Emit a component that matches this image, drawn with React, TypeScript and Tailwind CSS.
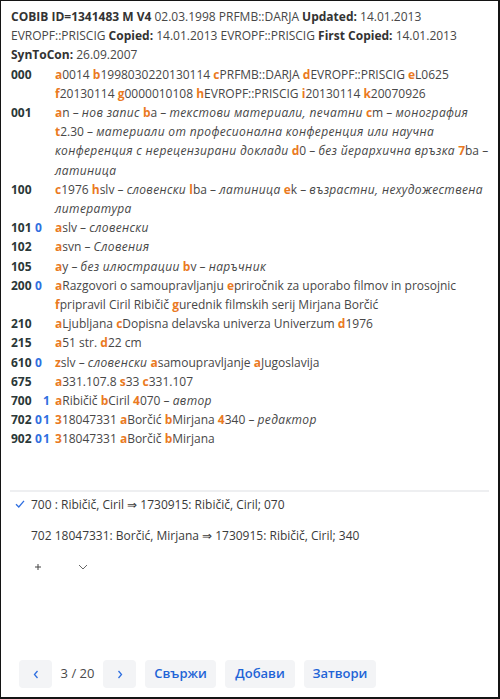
import React from "react";

type Sub = { c: string; v: string; d?: string };
type Row = { tag: string; i1?: string; i2?: string; subs: Sub[] };

const rows: Row[] = [
  {
    tag: "000",
    subs: [
      { c: "a", v: "0014" },
      { c: "b", v: "1998030220130114" },
      { c: "c", v: "PRFMB::DARJA" },
      { c: "d", v: "EVROPF::PRISCIG" },
      { c: "e", v: "L0625" },
      { c: "f", v: "20130114" },
      { c: "g", v: "0000010108" },
      { c: "h", v: "EVROPF::PRISCIG" },
      { c: "i", v: "20130114" },
      { c: "k", v: "20070926" },
    ],
  },
  {
    tag: "001",
    subs: [
      { c: "a", v: "n", d: "нов запис" },
      { c: "b", v: "a", d: "текстови материали, печатни" },
      { c: "c", v: "m", d: "монография" },
      { c: "t", v: "2.30", d: "материали от професионална конференция или научна конференция с нерецензирани доклади" },
      { c: "d", v: "0", d: "без йерархична връзка" },
      { c: "7", v: "ba", d: "латиница" },
    ],
  },
  {
    tag: "100",
    subs: [
      { c: "c", v: "1976" },
      { c: "h", v: "slv", d: "словенски" },
      { c: "l", v: "ba", d: "латиница" },
      { c: "e", v: "k", d: "възрастни, нехудожествена литература" },
    ],
  },
  { tag: "101", i1: "0", subs: [{ c: "a", v: "slv", d: "словенски" }] },
  { tag: "102", subs: [{ c: "a", v: "svn", d: "Словения" }] },
  {
    tag: "105",
    subs: [
      { c: "a", v: "y", d: "без илюстрации" },
      { c: "b", v: "v", d: "наръчник" },
    ],
  },
  {
    tag: "200",
    i1: "0",
    subs: [
      { c: "a", v: "Razgovori o samoupravljanju" },
      { c: "e", v: "priročnik za uporabo filmov in prosojnic" },
      { c: "f", v: "pripravil Ciril Ribičič" },
      { c: "g", v: "urednik filmskih serij Mirjana Borčić" },
    ],
  },
  {
    tag: "210",
    subs: [
      { c: "a", v: "Ljubljana" },
      { c: "c", v: "Dopisna delavska univerza Univerzum" },
      { c: "d", v: "1976" },
    ],
  },
  {
    tag: "215",
    subs: [
      { c: "a", v: "51 str." },
      { c: "d", v: "22 cm" },
    ],
  },
  {
    tag: "610",
    i1: "0",
    subs: [
      { c: "z", v: "slv", d: "словенски" },
      { c: "a", v: "samoupravljanje" },
      { c: "a", v: "Jugoslavija" },
    ],
  },
  {
    tag: "675",
    subs: [
      { c: "a", v: "331.107.8" },
      { c: "s", v: "33" },
      { c: "c", v: "331.107" },
    ],
  },
  {
    tag: "700",
    i2: "1",
    subs: [
      { c: "a", v: "Ribičič" },
      { c: "b", v: "Ciril" },
      { c: "4", v: "070", d: "автор" },
    ],
  },
  {
    tag: "702",
    i1: "0",
    i2: "1",
    subs: [
      { c: "3", v: "18047331" },
      { c: "a", v: "Borčić" },
      { c: "b", v: "Mirjana" },
      { c: "4", v: "340", d: "редактор" },
    ],
  },
  {
    tag: "902",
    i1: "0",
    i2: "1",
    subs: [
      { c: "3", v: "18047331" },
      { c: "a", v: "Borčič" },
      { c: "b", v: "Mirjana" },
    ],
  },
];

function Field({ row }: { row: Row }) {
  return (
    <div className="flex">
      <div className="w-[44px] shrink-0 flex">
        <span className="font-bold text-[#2b3838] w-[24px]">{row.tag}</span>
        <span className="font-bold text-[#2f6fe0] w-[8px]">{row.i1 ?? ""}</span>
        <span className="font-bold text-[#2f6fe0] w-[8px]">{row.i2 ?? ""}</span>
      </div>
      <div className="flex-1 min-w-0">
        {row.subs.map((s, i) => (
          <React.Fragment key={i}>
            {i > 0 ? " " : ""}
            <span className="font-bold text-[#ea7a1f]">{s.c}</span>
            <span>{s.v}</span>
            {s.d ? (
              <>
                {" – "}
                <span className="italic tracking-[0.35px]">{s.d}</span>
              </>
            ) : null}
          </React.Fragment>
        ))}
      </div>
    </div>
  );
}

export default function App() {
  return (
    <div
      className="w-[500px] h-[699px] bg-white border-l border-t border-r-2 border-b-2 border-[#141414] flex flex-col text-[12px] leading-[19.2px] text-[#474747]"
      style={{ fontFamily: '"Open Sans", "Noto Sans", Arial, sans-serif' }}
    >
      <div className="pl-[10px] pr-[8px] pt-[6px]">
        <div>
          <span className="font-bold text-[#333]">COBIB ID=1341483 M V4</span> 02.03.1998 PRFMB::DARJA{" "}
          <span className="font-bold text-[#333]">Updated:</span> 14.01.2013 EVROPF::PRISCIG{" "}
          <span className="font-bold text-[#333]">Copied:</span> 14.01.2013 EVROPF::PRISCIG{" "}
          <span className="font-bold text-[#333]">First Copied:</span> 14.01.2013{" "}
          <span className="font-bold text-[#333]">SynToCon:</span> 26.09.2007
        </div>
        {rows.map((r, i) => (
          <Field key={i} row={r} />
        ))}
      </div>

      <div className="mx-[9px] mt-[41px] h-[2px] bg-[#eeeff1]" />

      <div className="pl-[14px] pt-[3px] text-[#3a3a3a]">
        <div className="flex items-center h-[19px]">
          <svg width="10" height="10" viewBox="0 0 10 10" className="mr-[6px]">
            <path d="M1 5.2 L3.8 8 L9 1.8" fill="none" stroke="#2f6fe0" strokeWidth="1.3" />
          </svg>
          <span>700 : Ribičič, Ciril ⇒ 1730915: Ribičič, Ciril; 070</span>
        </div>
        <div className="flex items-center h-[19px] mt-[12px] pl-[16px]">
          702 18047331: Borčić, Mirjana ⇒ 1730915: Ribičič, Ciril; 340
        </div>
        <div className="flex items-center h-[19px] mt-[13px] pl-[19px] gap-[36px]">
          <svg width="8" height="8" viewBox="0 0 8 8">
            <path d="M4 1 V7 M1 4 H7" stroke="#444" strokeWidth="1" />
          </svg>
          <svg width="10" height="6" viewBox="0 0 10 6">
            <path d="M1 1 L5 5 L9 1" fill="none" stroke="#666" strokeWidth="1" />
          </svg>
        </div>
      </div>

      <div className="flex-1" />

      <div className="flex items-center pl-[18px] pb-[9px] text-[13px]">
        <button className="w-[33px] h-[28px] rounded-[4px] bg-[#f3f4f6] flex items-center justify-center">
          <svg width="6" height="9" viewBox="0 0 6 9">
            <path d="M4.5 1 L1.5 4.5 L4.5 8" fill="none" stroke="#2f6fe0" strokeWidth="1.3" />
          </svg>
        </button>
        <span className="w-[51px] text-center text-[#4a4a4a]">3 / 20</span>
        <button className="w-[33px] h-[28px] rounded-[4px] bg-[#f3f4f6] flex items-center justify-center">
          <svg width="6" height="9" viewBox="0 0 6 9">
            <path d="M1.5 1 L4.5 4.5 L1.5 8" fill="none" stroke="#2f6fe0" strokeWidth="1.3" />
          </svg>
        </button>
        <button className="ml-[9px] w-[71px] h-[28px] rounded-[4px] bg-[#f3f4f6] font-semibold text-[#1f64d6]">
          Свържи
        </button>
        <button className="ml-[9px] w-[70px] h-[28px] rounded-[4px] bg-[#f3f4f6] font-semibold text-[#1f64d6]">
          Добави
        </button>
        <button className="ml-[9px] w-[72px] h-[28px] rounded-[4px] bg-[#f3f4f6] font-semibold text-[#1f64d6]">
          Затвори
        </button>
      </div>
    </div>
  );
}
